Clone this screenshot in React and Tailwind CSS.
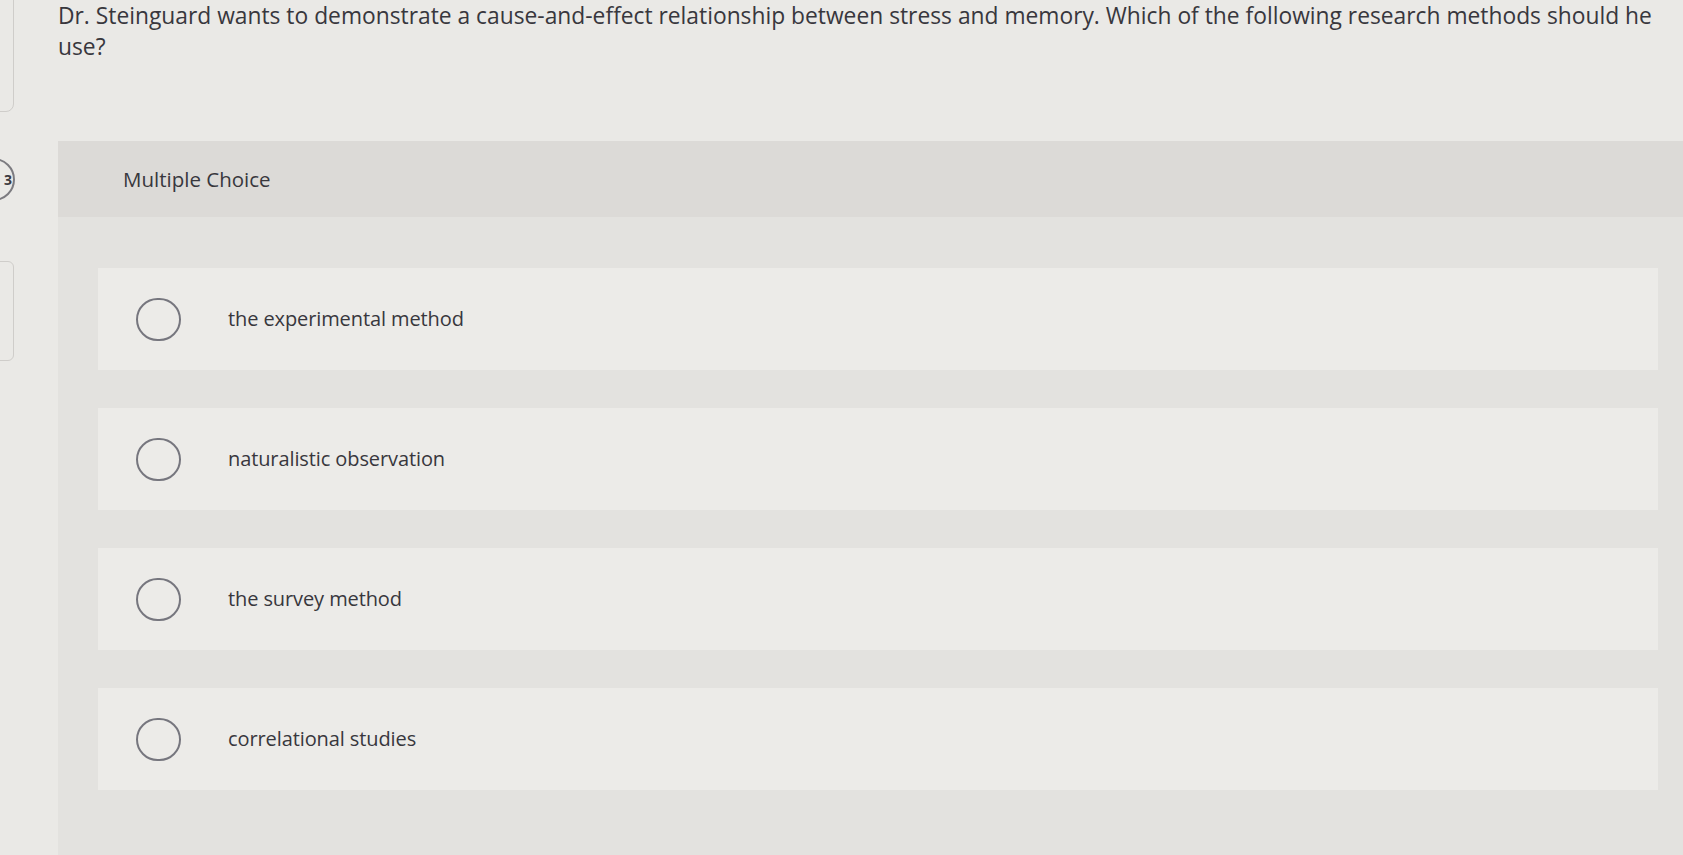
import React from "react";

const options = [
  "the experimental method",
  "naturalistic observation",
  "the survey method",
  "correlational studies",
];

// left edge: bits of the sidebar cut off by the screen edge
const EdgeStrip = () => {
  return (
    <div className="w-[15px] shrink-0 overflow-hidden">
      <div className="-ml-[50px] -mt-[12px] h-[124px] w-[64px] rounded-lg border border-[#cfcdca]" />
      <div className="-ml-[28px] mt-[46px] flex h-[43px] w-[43px] items-center justify-end rounded-full border-2 border-[#7c7b80] pr-[1px] text-[14px] font-bold text-[#3b3a3f]">
        3
      </div>
      <div className="-ml-[50px] mt-[60px] h-[100px] w-[64px] rounded-md border border-[#cfcdca]" />
    </div>
  );
};

const Option = ({ label }) => {
  return (
    <div className="flex h-[102px] items-center bg-[#ecebe8] pl-[38px]">
      <div className="h-[43px] w-[45px] shrink-0 rounded-full border-2 border-[#76767e]" />
      <span className="ml-[47px] text-[20px] tracking-[-0.1px] text-[#38373d]">{label}</span>
    </div>
  );
};

const App = () => {
  return (
    <div
      className="flex min-h-[855px] w-full overflow-hidden bg-[#eae9e6]"
      style={{ fontFamily: "'Open Sans', Lato, sans-serif" }}
    >
      <EdgeStrip />
      <div className="flex min-w-0 flex-1 flex-col pl-[43px]">
        <p className="whitespace-nowrap text-[22.8px] leading-[31px] text-[#38373d]">
          Dr. Steinguard wants to demonstrate a cause-and-effect relationship
          between stress and memory. Which of the following research methods
          should he
          <br />
          use?
        </p>
        <div className="mt-[79px] flex flex-1 flex-col bg-[#e3e2df]">
          <div className="flex h-[76px] items-center bg-[#dcdad7] pl-[65px] text-[20.5px] text-[#38373d]">
            Multiple Choice
          </div>
          <div className="flex flex-col gap-[38px] pl-[40px] pr-[25px] pt-[51px]">
            {options.map((opt, i) => (
              <Option key={i} label={opt} />
            ))}
          </div>
        </div>
      </div>
    </div>
  );
};

export default App;
